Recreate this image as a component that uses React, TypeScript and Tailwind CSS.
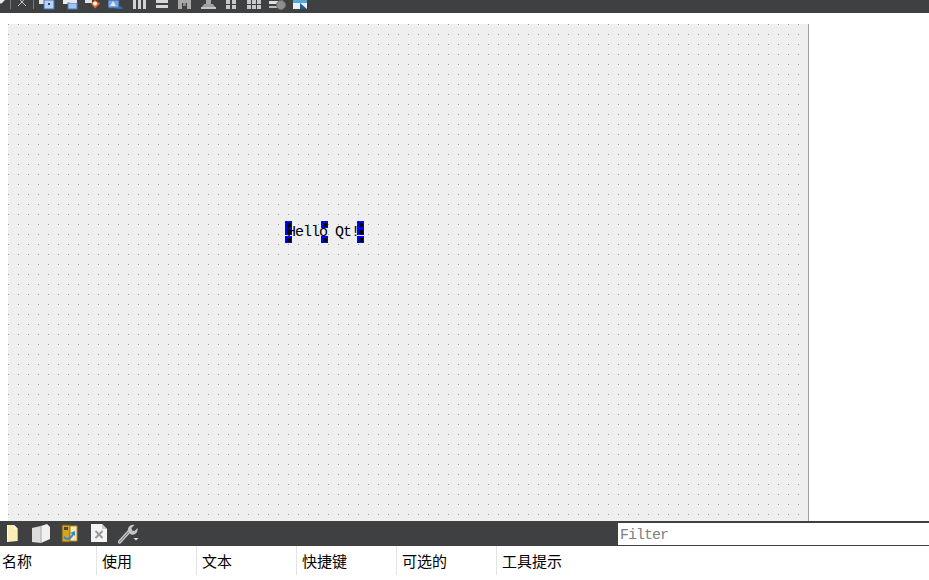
const hdrs = ["名称", "使用", "文本", "快捷键", "可选的", "工具提示"];

function Handle() {
  return (
    <span className="flex items-center justify-center w-[7px] h-[7px] bg-[#0000ff]">
      <span className="block w-[4px] h-[4px] bg-black" />
    </span>
  );
}

function HandleCol({ full }: { full?: boolean }) {
  return (
    <div className="flex flex-col h-[22px]">
      <Handle />
      {full ? <Handle /> : <span className="block h-[7px]" />}
      <div className="mt-[1px]">
        <Handle />
      </div>
    </div>
  );
}

// top toolbar is cut off by the window, so every icon only shows its lower part
const topIcons = [
  { w: 5, ml: 0, el: <path d="M0 0h5L1.500 3.500H0z" fill="#e8e8e8" /> },
  { w: 1, ml: 5, el: <rect width="1" height="9" fill="#77797b" /> },
  { w: 11, ml: 5, el: <path d="M1 0l5 5.500L10.500 0M6 5.500l-4 4M6 5.500l4 4" transform="translate(0 -3.500)" stroke="#c8c8c8" fill="none" /> },
  { w: 1, ml: 6, el: <rect width="1" height="9" fill="#77797b" /> },
  { w: 16, ml: 5, el: <><rect x="0" y="0" width="6" height="4" fill="#e6e6e6" /><rect x="5" y="0" width="10" height="9" fill="#bcd2f0" stroke="#3f70b8" /><rect x="9" y="3" width="2" height="2" fill="#224c9a" /></> },
  { w: 15, ml: 8, el: <><rect x="0" y="0" width="8" height="4" fill="#ececec" /><rect x="5" y="3" width="9" height="6" fill="#a9c3e6" stroke="#4a7dbd" /><rect x="7" y="0" width="7" height="3" fill="#dfe8f3" /></> },
  { w: 17, ml: 7, el: <><rect x="0" y="0" width="7" height="3" fill="#e4e4e4" /><path d="M10 0l5 3.500-5 5-4-5z" fill="#f26a1b" /><circle cx="10" cy="3.500" r="2" fill="#fff" /></> },
  { w: 16, ml: 6, el: <><rect x="0" y="0" width="11" height="8" fill="#7ea4d6" stroke="#2c5a9e" /><path d="M2 6l3-5 3 5z" fill="#dbe6f5" /><path d="M8 8h7M12 6v3" stroke="#3b7fd0" /></> },
  { w: 13, ml: 9, el: <><rect x="0" width="3" height="9" fill="#d2d2d2" /><rect x="5" width="3" height="9" fill="#d2d2d2" /><rect x="10" width="3" height="9" fill="#d2d2d2" /></> },
  { w: 12, ml: 10, el: <><rect y="0" width="12" height="3" fill="#d6d6d6" /><rect y="5" width="12" height="3" fill="#d6d6d6" /></> },
  { w: 13, ml: 10, el: <><rect width="13" height="3" fill="#a8a8a8" /><rect y="3" width="4" height="6" fill="#a8a8a8" /><rect x="9" y="3" width="4" height="6" fill="#a8a8a8" /><rect x="5" y="3" width="3" height="3" fill="#8a8a8a" /></> },
  { w: 15, ml: 10, el: <><rect x="5" width="5" height="4" fill="#a8a8a8" /><path d="M3 4h9l2 3H1z" fill="#a0a0a0" /><rect x="0" y="7" width="15" height="2" fill="#c4c4c4" /></> },
  { w: 10, ml: 10, el: <><rect width="4" height="4" fill="#c8c8c8" /><rect x="6" width="4" height="4" fill="#c8c8c8" /><rect y="5" width="4" height="4" fill="#c8c8c8" /><rect x="6" y="5" width="4" height="4" fill="#c8c8c8" /></> },
  { w: 14, ml: 11, el: <><rect width="4" height="4" fill="#c8c8c8" /><rect x="5" width="4" height="4" fill="#c8c8c8" /><rect x="10" width="4" height="4" fill="#c8c8c8" /><rect y="5" width="4" height="4" fill="#c8c8c8" /><rect x="5" y="5" width="4" height="4" fill="#c8c8c8" /><rect x="10" y="5" width="4" height="4" fill="#c8c8c8" /></> },
  { w: 17, ml: 8, el: <><rect y="1" width="9" height="3" fill="#e0e0e0" /><rect y="6" width="9" height="2" fill="#bdbdbd" /><circle cx="12" cy="5" r="4.500" fill="#8f8f8f" stroke="#6d6d6d" /></> },
  { w: 14, ml: 7, el: <><rect width="14" height="9" fill="#e8f0f6" /><path d="M0 0h14v3H0z" fill="#5aa6d6" /><path d="M7 3l7 6H7z" fill="#1f5f8f" /></> },
];

export default function App() {
  return (
    <div className="w-[929px] h-[580px] bg-white overflow-hidden flex flex-col font-['Liberation_Sans',sans-serif]">
      <div className="h-[13px] bg-[#3e4042] shrink-0 flex items-start">
        {topIcons.map((ic, i) => (
          <svg key={i} width={ic.w} height={10} viewBox={`0 0 ${ic.w} 10`} style={{ marginLeft: ic.ml }} className="shrink-0">
            {ic.el}
          </svg>
        ))}
      </div>
      <div className="h-[11px] shrink-0" />
      <div className="h-[497px] shrink-0 flex">
        <div className="w-[8px]" />
        <div className="w-[800px] bg-[#efefef] bg-[radial-gradient(circle_at_0.5px_0.5px,#9a9a9a_0.7px,transparent_0.7px)] bg-[length:10px_10px] flex items-center justify-center">
          <div className="flex w-[79px] justify-between relative top-[-40.5px] left-[-83.5px]">
            <HandleCol full />
            <HandleCol />
            <HandleCol full />
            <span className="absolute left-[2px] top-[3px] text-[15px] leading-[18px] tracking-[-1px] font-['Liberation_Mono',monospace] text-black whitespace-nowrap">Hello Qt!</span>
          </div>
        </div>
        <div className="w-px bg-[#a0a0a0]" />
      </div>
      <div className="h-[25px] shrink-0 bg-[#3e4042] flex">
        <div className="w-[618px] pl-[7px] pt-[3px] flex gap-[14px] items-start">
          <svg width="11" height="19" viewBox="0 0 11 19">
            <path d="M0.500 1h6.500l3.500 3.500V17l-10 1z" fill="#fbeeb5" />
            <path d="M7 1v3.500h3.500" fill="#fff" />
            <path d="M0.500 1v17" stroke="#fff" />
            <path d="M10.500 5v12" stroke="#d9b860" />
          </svg>
          <svg width="19" height="19" viewBox="0 0 19 19">
            <path d="M0 4l9-2v17l-9-1z" fill="#dddddd" />
            <path d="M9 2l6-2 3 3v12l-9 4z" fill="#f0f0f0" />
            <path d="M9 2v17" stroke="#a8a8a8" />
          </svg>
          <svg width="17" height="19" viewBox="0 0 17 19" className="ml-[-4px]">
            <path d="M1 1h8v17H1z" fill="#d6a51f" stroke="#6d5510" />
            <path d="M9 2h7v15H9z" fill="#fae7b0" stroke="#b48c2c" />
            <rect x="3" y="3" width="4" height="3" fill="#4c4c3a" />
            <path d="M3 12c3 3 6 2 8-2l-2-1 5-2v5l-1.500-1c-2 5-7 6-10 3z" fill="#2e86d6" />
          </svg>
          <svg width="16" height="18" viewBox="0 0 16 18" className="ml-[-1px]">
            <path d="M0 0h11l5 5v13H0z" fill="#f4f4f4" />
            <path d="M11 0v5h5z" fill="#c8c8c8" />
            <path d="M4.500 7l7 7M11.500 7l-7 7" stroke="#9a9a9a" strokeWidth="2" />
          </svg>
          <svg width="22" height="20" viewBox="0 0 22 20" className="ml-[-3px]">
            <path d="M1.500 18L12 6.500" stroke="#c4c4c4" strokeWidth="3.500" strokeLinecap="round" />
            <path d="M1.500 18L12 6.500" stroke="#6d6d6d" strokeWidth="1" strokeLinecap="round" />
            <path d="M10 7.500c-1-4 2.500-7.500 6.500-6.500l-3 3 .5 2.500 2.500.5 3-3c1 4-2.500 7.500-6.500 6.500z" fill="#c4c4c4" />
            <path d="M15.500 14h5l-2.500 2.500z" fill="#e0e0e0" />
          </svg>
        </div>
        <div className="flex-1 h-[22px] mt-[2px] bg-white pl-[2px] text-[15px] leading-[25px] tracking-[-1px] text-[#808080] font-['Liberation_Mono',monospace]">Filter</div>
      </div>
      <div className="flex h-[29px]">
        {hdrs.map((h, i) => (
          <div key={h} className="flex w-[100px]">
            <div className="w-[96px] pl-[2px] pt-[5px] text-[15px] leading-[20px] text-black font-['Noto_Sans_CJK_SC',sans-serif] whitespace-nowrap">{h}</div>
            {i < 5 && <div className="w-px bg-[#e4e4e4]" />}
          </div>
        ))}
      </div>
    </div>
  );
}
